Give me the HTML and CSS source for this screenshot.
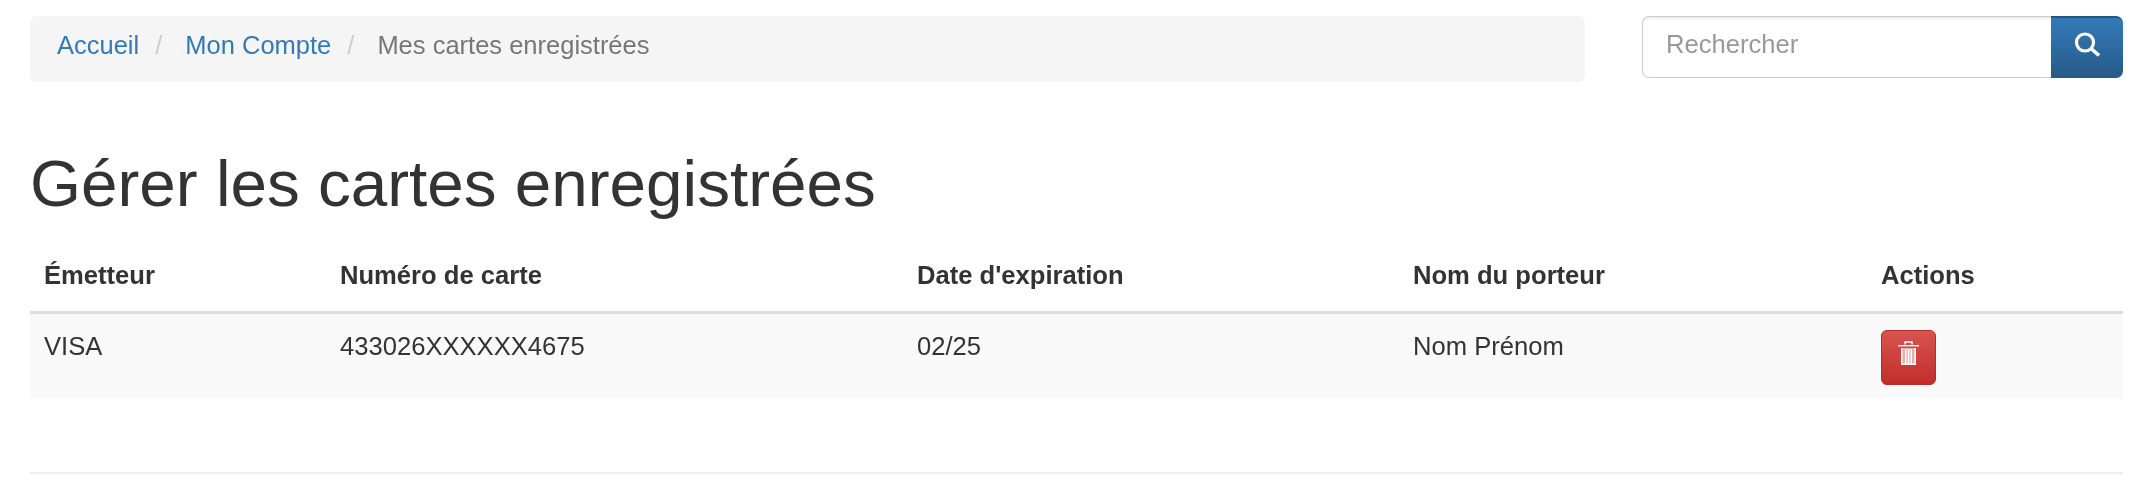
FILE: index.html
```html
<!DOCTYPE html>
<html lang="fr">
<head>
  <meta charset="UTF-8" />
  <title>Gérer les cartes enregistrées</title>
  <link rel="stylesheet" href="styles.css">
</head>
<body>

  <div class="top">
    <ol class="breadcrumb">
      <li><a href="#">Accueil</a></li>
      <li class="sep">/</li>
      <li><a href="#">Mon Compte</a></li>
      <li class="sep">/</li>
      <li class="active">Mes cartes enregistrées</li>
    </ol>
    <form class="search">
      <input type="text" placeholder="Rechercher">
      <button type="button" class="btn-search">
        <svg width="26" height="26" viewBox="0 0 26 26">
          <circle cx="11" cy="10.500" r="8.500" fill="none" stroke="#fff" stroke-width="3.200"/>
          <path d="M17 16.500l8 7" fill="none" stroke="#fff" stroke-width="3.600"/>
        </svg>
      </button>
    </form>
  </div>

  <h1>Gérer les cartes enregistrées</h1>

  <table>
    <thead>
      <tr>
        <th class="col-issuer">Émetteur</th>
        <th class="col-number">Numéro de carte</th>
        <th class="col-date">Date d'expiration</th>
        <th class="col-name">Nom du porteur</th>
        <th>Actions</th>
      </tr>
    </thead>
    <tbody>
      <tr>
        <td>VISA</td>
        <td>433026XXXXXX4675</td>
        <td>02/25</td>
        <td>Nom Prénom</td>
        <td>
          <button type="button" class="btn-delete">
            <svg width="21" height="24" viewBox="0 0 21 24">
              <path d="M7 3.500V1h7v2.500" fill="none" stroke="#fff" stroke-width="1.400"/>
              <rect x="0" y="4" width="21" height="1.400" fill="#fff"/>
              <path d="M3 7h15v17H3z" fill="#fff" fill-opacity=".55"/>
              <path d="M3.800 7v17M17.200 7v17M3 23.200h15M7.700 8v15M10.500 8v15M13.300 8v15" fill="none" stroke="#fff" stroke-width="1.500"/>
            </svg>
          </button>
        </td>
      </tr>
    </tbody>
  </table>

  <hr>

</body>
</html>
```

FILE: styles.css
```css
body {
  margin: 0;
  padding: 16px 25px 0 30px;
  background: #fff;
  color: #333;
  font-family: "Liberation Sans", Arial, sans-serif;
  font-size: 25.6px;
  line-height: 36px;
  filter: blur(0.5px);
}

a {
  color: #337ab7;
  text-decoration: none;
}

.top {
  display: flex;
  justify-content: space-between;
  align-items: flex-start;
}

.breadcrumb {
  display: flex;
  gap: 20px;
  width: 1555px;
  height: 66px;
  box-sizing: border-box;
  margin: 0;
  padding: 11px 27px;
  list-style: none;
  background: #f5f5f5;
  border-radius: 7px;
  font-size: 25.5px;
}

.sep {
  margin: 0 3px 0 -4px;
  color: #ccc;
}

.active {
  color: #777;
}

.search {
  display: flex;
  width: 481px;
  height: 62px;
}

.search input {
  flex: 1;
  min-width: 0;
  box-sizing: border-box;
  padding: 0 23px 6px;
  border: 1.500px solid #ccc;
  border-right: none;
  border-radius: 7px 0 0 7px;
  font: inherit;
  color: #555;
  outline: none;
  box-shadow: inset 0 2px 2px rgba(0, 0, 0, 0.07);
}

.search input::placeholder {
  color: #999;
}

.btn-search {
  display: flex;
  align-items: center;
  justify-content: center;
  width: 72px;
  padding: 0 0 7px;
  border: none;
  border-top: 2px solid #245580;
  border-radius: 0 7px 7px 0;
  background: linear-gradient(#337ab7, #265a88);
}

h1 {
  margin: 66px 0 24px;
  font-size: 65.600px;
  font-weight: 500;
  line-height: 72px;
}

table {
  width: 100%;
  border-collapse: collapse;
}

th, td {
  padding: 14px 14px;
  text-align: left;
  vertical-align: top;
}

td {
  padding-bottom: 13px;
}

th {
  padding-top: 13px;
  padding-bottom: 18px;
  border-bottom: 3px solid #ddd;
}

tbody tr {
  background: #f9f9f9;
}

.col-issuer {
  width: 268px;
}

.col-number {
  width: 549px;
}

.col-date {
  width: 468px;
}

.col-name {
  width: 440px;
}

.btn-delete {
  display: flex;
  align-items: center;
  justify-content: center;
  width: 55px;
  height: 55px;
  margin-top: 2px;
  padding: 0 0 9px;
  border: 1px solid #b92c28;
  border-radius: 6px;
  background: linear-gradient(#d9534f, #c12e2a);
}

hr {
  margin: 74px 0 0;
  border: none;
  border-top: 2px solid #eee;
}
```
